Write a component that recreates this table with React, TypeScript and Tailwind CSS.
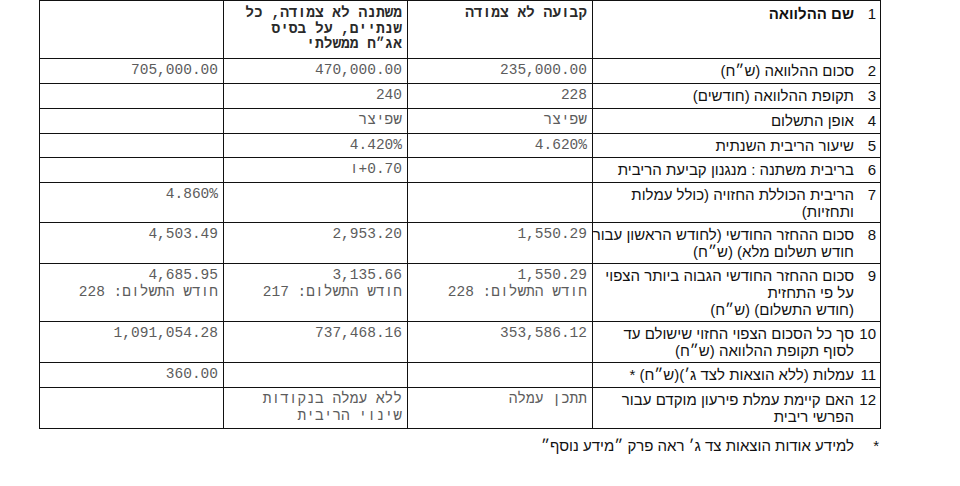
import React from "react";

const sans = { fontFamily: '"Liberation Sans", Arial, sans-serif' } as const;
const mono = { fontFamily: '"Liberation Mono", "Courier New", monospace' } as const;

type Row = {
  n: string;
  h: string;
  label: React.ReactNode;
  c2?: React.ReactNode;
  c3?: React.ReactNode;
  c4?: React.ReactNode;
};

const rows: Row[] = [
  { n: "2", h: "h-[25px]", label: "סכום ההלוואה (ש״ח)", c2: "235,000.00", c3: "470,000.00", c4: "705,000.00" },
  { n: "3", h: "h-[25px]", label: "תקופת ההלוואה (חודשים)", c2: "228", c3: "240" },
  { n: "4", h: "h-[25px]", label: "אופן התשלום", c2: "שפיצר", c3: "שפיצר" },
  { n: "5", h: "h-[24px]", label: "שיעור הריבית השנתית", c2: "4.620%", c3: "4.420%" },
  {
    n: "6",
    h: "h-[25px]",
    label: "בריבית משתנה : מנגנון קביעת הריבית",
    c3: (
      <span dir="ltr" className="inline-flex">
        <span>ו</span>
        <span>+0.70</span>
      </span>
    ),
  },
  {
    n: "7",
    h: "h-[40px]",
    label: (
      <>
        הריבית הכוללת החזויה (כולל עמלות
        <br />
        ותחזיות)
      </>
    ),
    c4: "4.860%",
  },
  {
    n: "8",
    h: "h-[41px]",
    label: (
      <>
        סכום ההחזר החודשי (לחודש הראשון עבור
        <br />
        חודש תשלום מלא) (ש״ח)
      </>
    ),
    c2: "1,550.29",
    c3: "2,953.20",
    c4: "4,503.49",
  },
  {
    n: "9",
    h: "h-[58px]",
    label: (
      <>
        סכום ההחזר החודשי הגבוה ביותר הצפוי
        <br />
        על פי התחזית
        <br />
        (חודש התשלום) (ש״ח)
      </>
    ),
    c2: (
      <>
        1,550.29
        <br />
        חודש התשלום: 228
      </>
    ),
    c3: (
      <>
        3,135.66
        <br />
        חודש התשלום: 217
      </>
    ),
    c4: (
      <>
        4,685.95
        <br />
        חודש התשלום: 228
      </>
    ),
  },
  {
    n: "10",
    h: "h-[41px]",
    label: (
      <>
        סך כל הסכום הצפוי החזוי שישולם עד
        <br />
        לסוף תקופת ההלוואה (ש״ח)
      </>
    ),
    c2: "353,586.12",
    c3: "737,468.16",
    c4: "1,091,054.28",
  },
  { n: "11", h: "h-[25px]", label: "עמלות (ללא הוצאות לצד ג׳)(ש״ח) *", c4: "360.00" },
  {
    n: "12",
    h: "h-[41px]",
    label: (
      <>
        האם קיימת עמלת פירעון מוקדם עבור
        <br />
        הפרשי ריבית
      </>
    ),
    c2: "תתכן עמלה",
    c3: (
      <>
        ללא עמלה בנקודות
        <br />
        שינוי הריבית
      </>
    ),
  },
];

function ValueCell({ children }: { children?: React.ReactNode }) {
  return (
    <td className="border border-[#111] align-top px-[5px] pt-[3px] text-right">
      <div
        style={mono}
        className="text-[14.5px] leading-[17px] text-[#5c5c5c] whitespace-nowrap"
      >
        {children}
      </div>
    </td>
  );
}

export default function App() {
  return (
    <div className="w-[960px] h-[486px] bg-white overflow-hidden">
      <table
        dir="rtl"
        className="ml-[39px] border-collapse table-fixed w-[841px]"
      >
        <colgroup>
          <col className="w-[288px]" />
          <col className="w-[185px]" />
          <col className="w-[184px]" />
          <col className="w-[184px]" />
        </colgroup>
        <tbody>
          <tr className="h-[58px]">
            <td className="border border-[#111] align-top pt-[4px]">
              <div className="flex" style={sans}>
                <span className="w-[26px] shrink-0 pr-[4px] text-[15px] leading-[17px] text-[#111]">
                  1
                </span>
                <span className="text-[15px] leading-[17px] font-bold text-[#111]">
                  שם ההלוואה
                </span>
              </div>
            </td>
            <td className="border border-[#111] align-top px-[5px] pt-[5px] text-right">
              <div style={mono} className="text-[14.5px] leading-[15.5px] font-bold text-[#2a2a2a] whitespace-nowrap">
                קבועה לא צמודה
              </div>
            </td>
            <td className="border border-[#111] align-top px-[5px] pt-[5px] text-right">
              <div style={mono} className="text-[14.5px] leading-[15.5px] font-bold text-[#2a2a2a] whitespace-nowrap">
                משתנה לא צמודה, כל
                <br />
                שנתיים, על בסיס
                <br />
                אג״ח ממשלתי
              </div>
            </td>
            <td className="border border-[#111]"></td>
          </tr>
          {rows.map((r) => (
            <tr key={r.n} className={r.h}>
              <td className="border border-[#111] align-top pt-[3px]">
                <div className="flex" style={sans}>
                  <span className="w-[26px] shrink-0 pr-[4px] text-[15px] leading-[17px] text-[#111]">
                    {r.n}
                  </span>
                  <span className="text-[15px] leading-[17px] text-[#111] whitespace-nowrap">
                    {r.label}
                  </span>
                </div>
              </td>
              <ValueCell>{r.c2}</ValueCell>
              <ValueCell>{r.c3}</ValueCell>
              <ValueCell>{r.c4}</ValueCell>
            </tr>
          ))}
        </tbody>
      </table>
      <div dir="rtl" className="ml-[39px] w-[841px] mt-[8px] flex" style={sans}>
        <span className="w-[26px] shrink-0 pr-[1px] text-[15px] leading-[17px] text-[#111]">*</span>
        <span className="text-[15px] leading-[17px] text-[#111]">
          למידע אודות הוצאות צד ג׳ ראה פרק ״מידע נוסף״
        </span>
      </div>
    </div>
  );
}
